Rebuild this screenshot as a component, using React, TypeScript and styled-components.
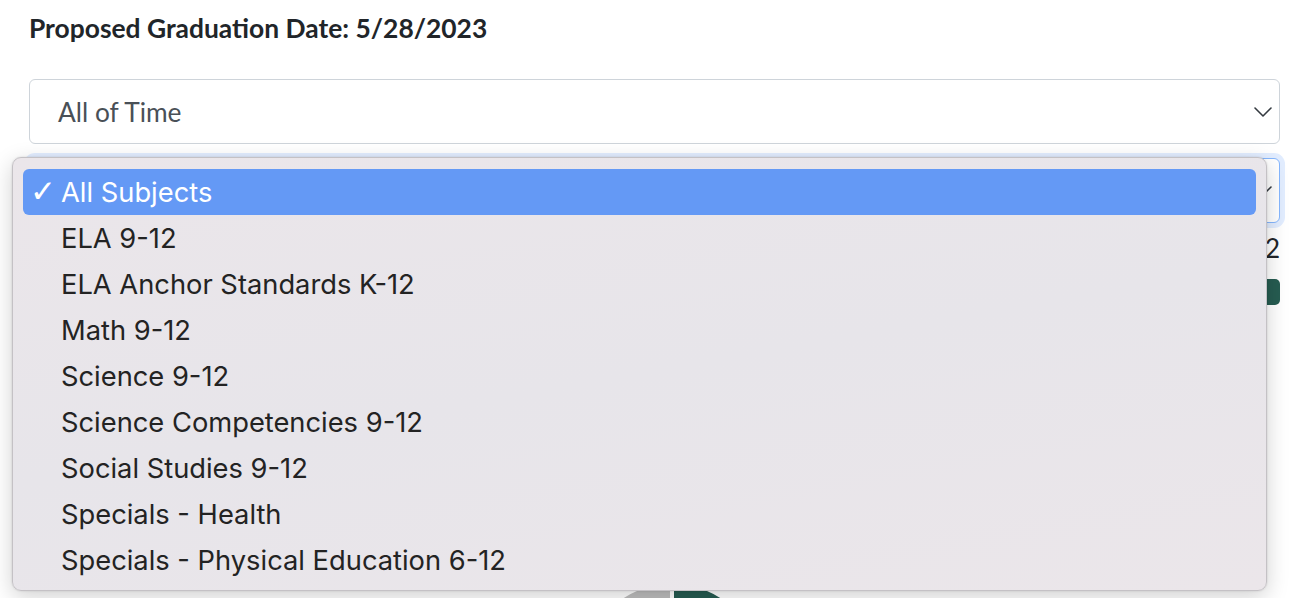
import React from "react";
import styled, { createGlobalStyle } from "styled-components";

const GlobalStyle = createGlobalStyle`
  html, body {
    margin: 0;
    padding: 0;
    background: #ffffff;
  }
  body {
    font-family: "Lato", "Open Sans", sans-serif;
    color: #212529;
  }
`;

const Page = styled.div`
  position: relative;
  height: 598px;
  overflow: hidden;
  padding: 13px 10px 0 29px;
  box-sizing: border-box;
`;

const Heading = styled.h6`
  margin: 0;
  height: 30px;
  font-size: 26.4px;
  line-height: 30px;
  font-weight: 700;
  color: #212529;
`;

const Filters = styled.div`
  display: flex;
  flex-direction: column;
  gap: 14px;
  margin-top: 36px;
`;

const SelectBox = styled.div<{ $focused?: boolean }>`
  height: 65px;
  box-sizing: border-box;
  display: flex;
  align-items: center;
  justify-content: space-between;
  padding: 0 7px 0 28px;
  background: #ffffff;
  border: 1px solid ${(p) => (p.$focused ? "#86b7fe" : "#ced4da")};
  border-radius: 6px;
  box-shadow: ${(p) =>
    p.$focused ? "0 0 0 5px rgba(13, 110, 253, 0.12)" : "none"};
  font-size: 26.3px;
  color: #495057;
`;

const Caption = styled.div`
  margin-top: 10px;
  height: 30px;
  text-align: right;
  font-size: 26px;
  line-height: 30px;
  color: #212529;
`;

const ProgressBar = styled.div`
  margin-top: 16px;
  height: 26px;
  border-radius: 5px;
  background: #265c51;
`;

const ChartArea = styled.div`
  display: flex;
  justify-content: center;
  padding-left: 35px;
  margin-top: 277px;
`;

const Menu = styled.div`
  position: absolute;
  left: 12px;
  top: 157px;
  width: 1255px;
  height: 434px;
  box-sizing: border-box;
  padding: 11px 10px 8px;
  background: linear-gradient(170deg, #ebe6ea 0%, #e7e5ea 50%, #ebe6ea 100%);
  border: 1px solid #c4c1c5;
  border-radius: 9px;
  box-shadow: 0 6px 22px rgba(0, 0, 0, 0.18), 0 0 2px rgba(0, 0, 0, 0.15);
  font-family: "Inter", "Liberation Sans", sans-serif;
`;

const MenuItem = styled.div<{ $active?: boolean }>`
  position: relative;
  height: 46px;
  display: flex;
  align-items: center;
  padding-left: 38px;
  border-radius: 6px;
  font-size: 27.3px;
  color: ${(p) => (p.$active ? "#ffffff" : "#232323")};
  background: ${(p) => (p.$active ? "#6499f5" : "transparent")};
`;

const Check = styled.span`
  position: absolute;
  left: 7px;
  top: 50%;
  transform: translateY(-52%);
  font-family: "DejaVu Sans", sans-serif;
  font-weight: 700;
  font-size: 31px;
  line-height: 1;
`;

const Chevron = () => (
  <svg width="18" height="10" viewBox="0 0 18 10" fill="none">
    <path
      d="M1 1l8 8 8-8"
      stroke="#343a40"
      strokeWidth="1.6"
      strokeLinecap="round"
      strokeLinejoin="round"
    />
  </svg>
);

const PieChart = () => (
  <svg width="184" height="184" viewBox="0 0 184 184">
    <path d="M92 92 L92 2 A90 90 0 0 1 92 182 Z" fill="#265c51" />
    <path d="M92 92 L92 182 A90 90 0 0 1 92 2 Z" fill="#bdbdbd" />
    <line x1="92" y1="0" x2="92" y2="184" stroke="#ffffff" strokeWidth="4" />
  </svg>
);

const subjects = [
  "All Subjects",
  "ELA 9-12",
  "ELA Anchor Standards K-12",
  "Math 9-12",
  "Science 9-12",
  "Science Competencies 9-12",
  "Social Studies 9-12",
  "Specials - Health",
  "Specials - Physical Education 6-12",
];

export default function App() {
  return (
    <>
      <GlobalStyle />
      <Page>
        <Heading>Proposed Graduation Date: 5/28/2023</Heading>
        <Filters>
          <SelectBox>
            <span>All of Time</span>
            <Chevron />
          </SelectBox>
          <SelectBox $focused>
            <span>All Subjects</span>
            <Chevron />
          </SelectBox>
        </Filters>
        <Caption>Standards Mastered: 0 / 12</Caption>
        <ProgressBar />
        <ChartArea>
          <PieChart />
        </ChartArea>

        <Menu>
          {subjects.map((s, i) => (
            <MenuItem key={s} $active={i === 0}>
              {i === 0 && <Check>✓</Check>}
              {s}
            </MenuItem>
          ))}
        </Menu>
      </Page>
    </>
  );
}
